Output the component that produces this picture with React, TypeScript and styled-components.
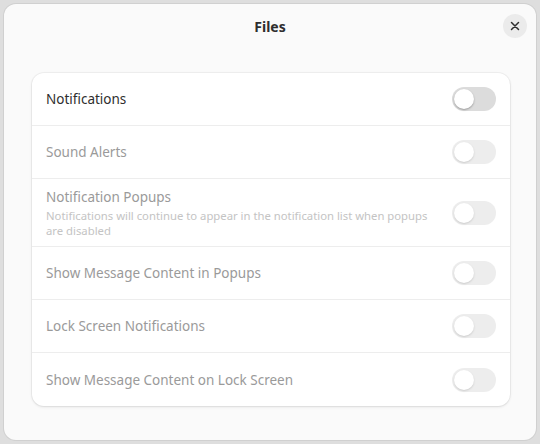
import React, { useState } from "react";
import styled, { createGlobalStyle } from "styled-components";

const GlobalStyle = createGlobalStyle`
  html, body {
    margin: 0;
    padding: 0;
    background: #dedede;
  }
  body {
    font-family: "Noto Sans", "Open Sans", sans-serif;
    -webkit-font-smoothing: antialiased;
  }
`;

type RowItem = {
  id: string;
  title: string;
  subtitle?: string;
};

const rows: RowItem[] = [
  { id: "notifications", title: "Notifications" },
  { id: "sound", title: "Sound Alerts" },
  {
    id: "popups",
    title: "Notification Popups",
    subtitle:
      "Notifications will continue to appear in the notification list when popups are disabled",
  },
  { id: "content-popups", title: "Show Message Content in Popups" },
  { id: "lock", title: "Lock Screen Notifications" },
  { id: "content-lock", title: "Show Message Content on Lock Screen" },
];

const App = () => {
  const [enabled, setEnabled] = useState(false);

  return (
    <>
      <GlobalStyle />
      <Frame>
        <Window>
          <HeaderBar>
            <Title>Files</Title>
            <CloseButton aria-label="Close">
              <svg width="10" height="10" viewBox="0 0 10 10">
                <path
                  d="M1.5 1.5 L8.5 8.5 M8.5 1.5 L1.5 8.5"
                  stroke="#2e2e2e"
                  strokeWidth="1.5"
                  strokeLinecap="round"
                />
              </svg>
            </CloseButton>
          </HeaderBar>
          <Content>
            <ListCard>
              {rows.map((row, index) => {
                const dimmed = index > 0 && !enabled;
                return (
                  <Row key={row.id} tall={!!row.subtitle}>
                    <Labels>
                      <RowTitle dimmed={dimmed}>{row.title}</RowTitle>
                      {row.subtitle && <RowSubtitle>{row.subtitle}</RowSubtitle>}
                    </Labels>
                    <Switch
                      dimmed={dimmed}
                      on={index === 0 ? enabled : false}
                      onClick={() => index === 0 && setEnabled(!enabled)}
                    >
                      <Knob on={index === 0 ? enabled : false} />
                    </Switch>
                  </Row>
                );
              })}
            </ListCard>
          </Content>
        </Window>
      </Frame>
    </>
  );
};

export default App;

const Frame = styled.div`
  width: 540px;
  height: 444px;
  padding: 4px;
  box-sizing: border-box;
`;

const Window = styled.div`
  height: 100%;
  background: #fafafa;
  border-radius: 12px;
  box-shadow: 0 0 0 1px #d0d0d0;
  display: flex;
  flex-direction: column;
  overflow: hidden;
`;

const HeaderBar = styled.div`
  height: 44px;
  flex-shrink: 0;
  display: flex;
  align-items: center;
  justify-content: center;
  position: relative;
`;

const Title = styled.div`
  font-size: 14px;
  font-weight: 700;
  color: #2e2e2e;
`;

const CloseButton = styled.button`
  position: absolute;
  right: 9px;
  top: 10px;
  width: 24px;
  height: 24px;
  border-radius: 50%;
  border: none;
  background: #ebebeb;
  display: flex;
  align-items: center;
  justify-content: center;
  padding: 0;
`;

const Content = styled.div`
  padding: 25px 26px 0 28px;
`;

const ListCard = styled.div`
  background: #ffffff;
  border-radius: 12px;
  box-shadow: 0 0 0 1px rgba(0, 0, 0, 0.04), 0 1px 3px rgba(0, 0, 0, 0.1);
  display: flex;
  flex-direction: column;
  overflow: hidden;
`;

const Row = styled.div<{ tall: boolean }>`
  min-height: ${(p) => (p.tall ? "68px" : "53px")};
  box-sizing: border-box;
  display: flex;
  align-items: center;
  justify-content: space-between;
  gap: 16px;
  padding: 0 14px 0 14px;
  border-bottom: 1px solid #ededed;

  &:last-child {
    border-bottom: none;
  }
`;

const Labels = styled.div`
  display: flex;
  flex-direction: column;
  gap: 2px;
  max-width: 392px;
`;

const RowTitle = styled.div<{ dimmed: boolean }>`
  font-size: 13.5px;
  color: ${(p) => (p.dimmed ? "#9a9a9a" : "#2e2e2e")};
`;

const RowSubtitle = styled.div`
  font-size: 11.3px;
  line-height: 15px;
  color: #c4c4c4;
`;

const Switch = styled.div<{ dimmed: boolean; on: boolean }>`
  width: 44px;
  height: 24px;
  flex-shrink: 0;
  border-radius: 12px;
  background: ${(p) => (p.on ? "#e95420" : "#dcdcdc")};
  opacity: ${(p) => (p.dimmed ? 0.5 : 1)};
  display: flex;
  align-items: center;
  padding: 0 2px;
  box-sizing: border-box;
  cursor: pointer;
`;

const Knob = styled.div<{ on: boolean }>`
  width: 20px;
  height: 20px;
  border-radius: 50%;
  background: #ffffff;
  box-shadow: 0 1px 2px rgba(0, 0, 0, 0.3);
  margin-left: ${(p) => (p.on ? "20px" : "0")};
`;
